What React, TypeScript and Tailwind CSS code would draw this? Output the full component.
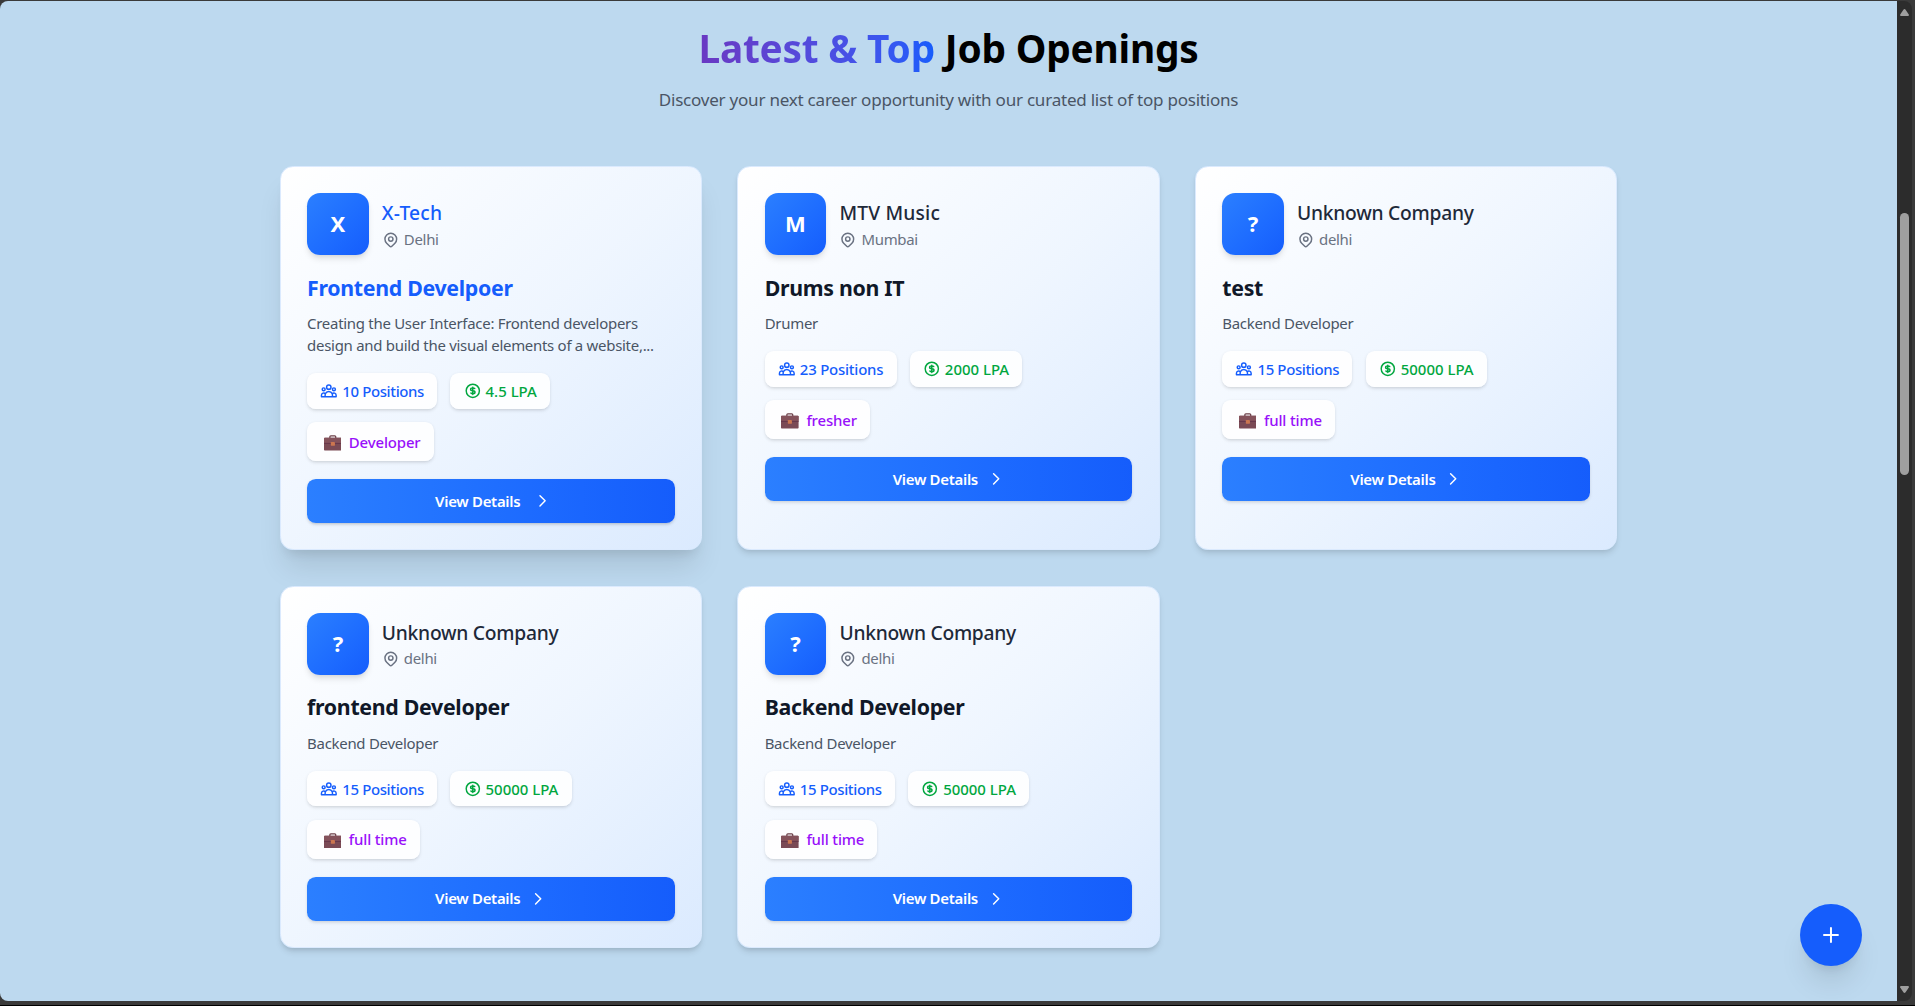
import React from 'react';
import {
  HiOutlineChevronRight,
  HiOutlineCurrencyDollar,
  HiOutlineLocationMarker,
  HiOutlineUserGroup,
} from 'react-icons/hi';

type Job = {
  company: string;
  initial: string;
  location: string;
  title: string;
  description: string;
  positions: number;
  salary: string;
  type: string;
  active?: boolean;
};

const jobs: Job[] = [
  {
    company: 'X-Tech',
    initial: 'X',
    location: 'Delhi',
    title: 'Frontend Develpoer',
    description:
      'Creating the User Interface: Frontend developers design and build the visual elements of a website,...',
    positions: 10,
    salary: '4.5',
    type: 'Developer',
    active: true,
  },
  { company: 'MTV Music', initial: 'M', location: 'Mumbai', title: 'Drums non IT', description: 'Drumer', positions: 23, salary: '2000', type: 'fresher' },
  { company: 'Unknown Company', initial: '?', location: 'delhi', title: 'test', description: 'Backend Developer', positions: 15, salary: '50000', type: 'full time' },
  { company: 'Unknown Company', initial: '?', location: 'delhi', title: 'frontend Developer', description: 'Backend Developer', positions: 15, salary: '50000', type: 'full time' },
  { company: 'Unknown Company', initial: '?', location: 'delhi', title: 'Backend Developer', description: 'Backend Developer', positions: 15, salary: '50000', type: 'full time' },
];

function Briefcase() {
  return (
    <svg viewBox="0 0 18 16" className="mt-0.5 mr-[3px] ml-[3px] h-[14.4px] w-4 shrink-0">
      <path d="M6 3.2V1.7Q6 .7 7 .7h4q1 0 1 1v1.5" fill="none" stroke="#6b3f48" strokeWidth="1.3" />
      <rect x="0" y="2.6" width="18" height="13.2" rx=".8" fill="#7a4a55" />
      <rect x="0" y="2.6" width="18" height="5.6" rx=".8" fill="#84525b" />
      <rect x="0" y="8" width="18" height="1" fill="#66364a" />
      <rect x="7" y="7" width="4.2" height="3.8" rx=".5" fill="#cb7650" />
    </svg>
  );
}

function JobCard({ job }: { job: Job }) {
  const longName = job.company.length > 10;
  return (
    <article
      className={`rounded-xl border border-blue-100 bg-linear-to-br from-white via-blue-50 to-blue-100 p-6 ${
        job.active ? 'shadow-xl' : 'shadow-md'
      }`}
    >
      <div className="mb-4 flex items-center gap-3">
        <div className="flex size-14 items-center justify-center rounded-xl bg-linear-to-br from-blue-500 to-blue-600 pb-px text-[20px] font-bold text-white shadow-md">
          {job.initial}
        </div>
        <div>
          <h3
            className={`text-[17.5px] leading-7 font-medium ${longName ? 'tracking-[-0.24px]' : 'tracking-[0.16px]'} ${
              job.active ? 'text-blue-600' : 'text-gray-800'
            }`}
          >
            {job.company}
          </h3>
          <p className="flex items-center gap-1 text-[13.6px] leading-[19.4px] tracking-[-0.28px] text-gray-500">
            <HiOutlineLocationMarker className="size-4" />
            {job.location}
          </p>
        </div>
      </div>
      <h2
        className={`mb-2 text-[19.4px] leading-7 font-bold tracking-[-0.28px] ${
          job.active ? 'text-blue-600' : 'text-gray-900'
        }`}
      >
        {job.title}
      </h2>
      <p className="mb-[15.5px] line-clamp-2 text-[13.6px] leading-5 tracking-[-0.25px] text-gray-600">
        {job.description}
      </p>
      <div className="mb-[16.4px] flex flex-wrap gap-3 text-[13.6px] leading-5 font-medium">
        <span
          className={`flex h-[32.4px] items-center gap-1 rounded-lg bg-white/90 px-3 text-blue-600 shadow-sm ${
            job.positions > 20 ? 'tracking-[-0.2px]' : 'tracking-[-0.33px]'
          }`}
        >
          <HiOutlineUserGroup className="size-4" />
          {job.positions} Positions
        </span>
        <span className="flex h-[32.4px] items-center gap-1 rounded-lg bg-white/90 px-3 text-green-600 shadow-sm">
          <HiOutlineCurrencyDollar className="size-4" />
          {job.salary} LPA
        </span>
        <div className="flex w-full">
          <span className="flex h-[35.4px] items-center gap-1 rounded-lg bg-white/90 px-3 pt-[0.5px] tracking-[-0.14px] text-purple-600 shadow-sm">
            <Briefcase />
            {job.type}
          </span>
        </div>
      </div>
      <button className="flex h-10 w-full items-center justify-center gap-2 rounded-lg bg-linear-to-r from-blue-500 to-blue-600 text-[13.6px] font-semibold tracking-[-0.27px] text-white shadow-sm">
        View Details
        <HiOutlineChevronRight className={`size-4 ${job.active ? 'translate-x-1' : ''}`} />
      </button>
    </article>
  );
}

function Scrollbar() {
  return (
    <div className="flex w-[15px] flex-col items-center rounded-r-lg bg-[#2c2c2c]">
      <svg viewBox="0 0 9 7" className="mt-2 h-[7px] w-[9px]">
        <path d="M4.5 0Q5 0 5.6.8L8.8 5.6Q9.2 7 8 7H1Q-.2 7 .2 5.6L3.4.8Q4 0 4.5 0z" fill="#9f9f9f" />
      </svg>
      <div className="mt-[197px] h-[262px] w-[9px] rounded-full bg-[#9f9f9f]" />
      <svg viewBox="0 0 9 7" className="mt-auto mb-2 h-[7px] w-[9px]">
        <path d="M4.5 7Q5 7 5.6 6.2L8.8 1.4Q9.2 0 8 0H1Q-.2 0 .2 1.4L3.4 6.2Q4 7 4.5 7z" fill="#9f9f9f" />
      </svg>
    </div>
  );
}

export default function App() {
  return (
    <div className="h-[1006px] w-[1915px] overflow-hidden border-b border-black bg-[#3a3a3a] pt-px pr-[3px] pb-1 font-['Noto_Sans','Open_Sans',sans-serif]">
      <div className="flex h-full">
        <main className="relative flex-1 overflow-hidden rounded-l-lg bg-[#bdd9ef]">
          <div className="mx-auto max-w-7xl px-8 pt-[23px] [zoom:1.1]">
            <header className="mb-12 text-center">
              <h1 className="mb-[15px] text-[35.3px] leading-10 font-bold tracking-[-0.2px] text-black">
                <span className="bg-linear-to-r from-[#6a38c2] to-blue-600 bg-clip-text text-transparent">
                  Latest &amp; Top
                </span>{' '}
                Job Openings
              </h1>
              <p className="text-[15.5px] leading-6 tracking-[-0.215px] text-gray-600">
                Discover your next career opportunity with our curated list of top positions
              </p>
            </header>
            <div className="grid grid-cols-3 gap-8">
              {jobs.map((job, i) => (
                <JobCard key={i} job={job} />
              ))}
            </div>
          </div>
          <button
            aria-label="Add"
            className="absolute right-8 bottom-8 flex size-14 items-center justify-center rounded-full bg-blue-600 text-white shadow-xl [zoom:1.1]"
          >
            <svg viewBox="0 0 16 16" className="size-[14.5px]" stroke="currentColor" strokeWidth="2" strokeLinecap="round">
              <path d="M8 1v14M1 8h14" />
            </svg>
          </button>
        </main>
        <Scrollbar />
      </div>
    </div>
  );
}
